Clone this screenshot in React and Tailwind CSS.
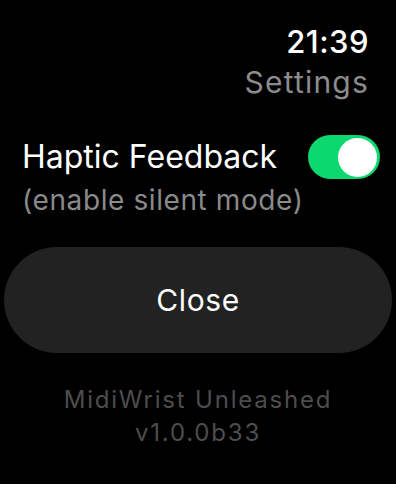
import React, { useState } from "react";

export default function App() {
  const [haptic, setHaptic] = useState(true);

  return (
    <div
      className="w-[396px] h-[484px] bg-black text-white overflow-hidden"
      style={{ fontFamily: "Inter, 'Liberation Sans', sans-serif" }}
    >
      <div className="flex flex-col items-end pr-[27px] pt-[24px]">
        <div className="text-[31px] leading-[36px] font-medium tracking-[0.5px]">21:39</div>
        <div className="text-[30px] leading-[36px] text-[#8c8c8c] mt-[4px] tracking-[1.2px]">Settings</div>
      </div>

      <div className="flex items-center justify-between pl-[22px] pr-[16px] mt-[35px]">
        <div className="text-[32px] leading-[34px]">Haptic Feedback</div>
        <button
          onClick={() => setHaptic(!haptic)}
          className={`w-[72px] h-[44px] rounded-full flex items-center px-[3px] ${haptic ? "bg-[#0bd970] justify-end" : "bg-[#3a3a3c] justify-start"}`}
        >
          <span className="w-[39px] h-[39px] rounded-full bg-white block" />
        </button>
      </div>
      <div className="pl-[22px] text-[28px] leading-[32px] text-[#8a8a8a] mt-[5px] tracking-[0.6px]">
        (enable silent mode)
      </div>

      <div className="px-[4px] mt-[31px]">
        <button className="w-full h-[106px] rounded-full bg-[#222222] text-[30px] text-white tracking-[0.6px]">
          Close
        </button>
      </div>

      <div className="mt-[30px] flex flex-col items-center text-[24px] leading-[33px] text-[#4d4d4d] tracking-[1.8px]">
        <div>MidiWrist Unleashed</div>
        <div>v1.0.0b33</div>
      </div>
    </div>
  );
}
